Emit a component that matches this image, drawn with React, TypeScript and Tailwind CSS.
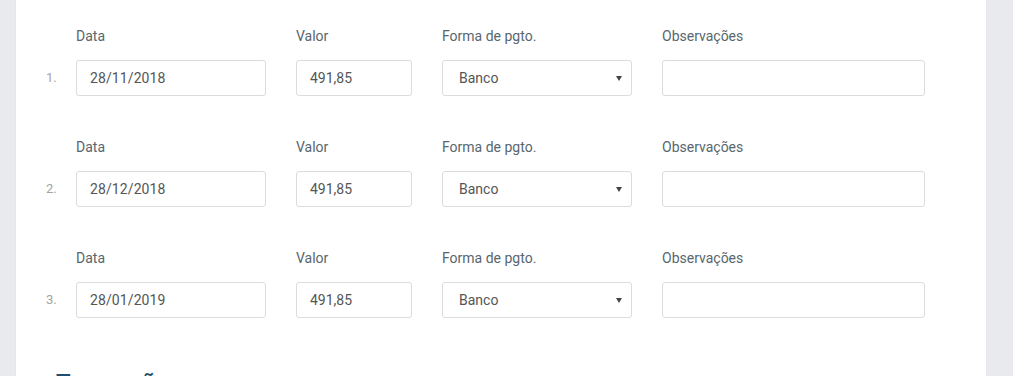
import React from "react";

const rows = [
  { n: "1.", date: "28/11/2018" },
  { n: "2.", date: "28/12/2018" },
  { n: "3.", date: "28/01/2019" },
];

function Label({ children }: { children: React.ReactNode }) {
  return <div className="h-5 text-[14px] leading-5 text-[#58666e] mb-[14px]">{children}</div>;
}

const box =
  "h-9 rounded-[3px] border border-[#dcdcdc] bg-white flex items-center text-[14px] text-[#555]";

export default function App() {
  return (
    <div
      className="w-[1013px] h-[376px] overflow-hidden bg-[#e9eaee] pl-4 pr-[27px]"
      style={{ fontFamily: "Roboto, 'Noto Sans', sans-serif" }}
    >
      <div className="bg-white h-full pt-[26px] pl-[30px] shadow-[0_0_1px_rgba(0,0,0,0.08)]">
        <div className="flex flex-col gap-[41px]">
          {rows.map((r) => (
            <div key={r.n} className="flex">
              <div className="w-[30px] flex flex-col">
                <div className="h-5 mb-[14px]" />
                <div className="h-9 flex items-center text-[13px] text-[#a3a3a3]">{r.n}</div>
              </div>
              <div className="w-[190px] mr-[30px]">
                <Label>Data</Label>
                <div className={box + " pl-[13px] tracking-[0.1px]"}>{r.date}</div>
              </div>
              <div className="w-[116px] mr-[30px]">
                <Label>Valor</Label>
                <div className={box + " pl-[13px]"}>491,85</div>
              </div>
              <div className="w-[190px] mr-[30px]">
                <Label>Forma de pgto.</Label>
                <div className={box + " pl-[16px] pr-[6px] justify-between"}>
                  <span>Banco</span>
                  <svg width="6" height="5" viewBox="0 0 6 5" className="mr-[3px]">
                    <path d="M0 0 L6 0 L3 5 Z" fill="#444" />
                  </svg>
                </div>
              </div>
              <div className="w-[263px]">
                <Label>Observações</Label>
                <div className={box} />
              </div>
            </div>
          ))}
        </div>
        <div className="mt-[49px] pl-[10px] text-[24px] leading-8 font-medium text-[#1f4e6f]">
          Transações
        </div>
      </div>
    </div>
  );
}
